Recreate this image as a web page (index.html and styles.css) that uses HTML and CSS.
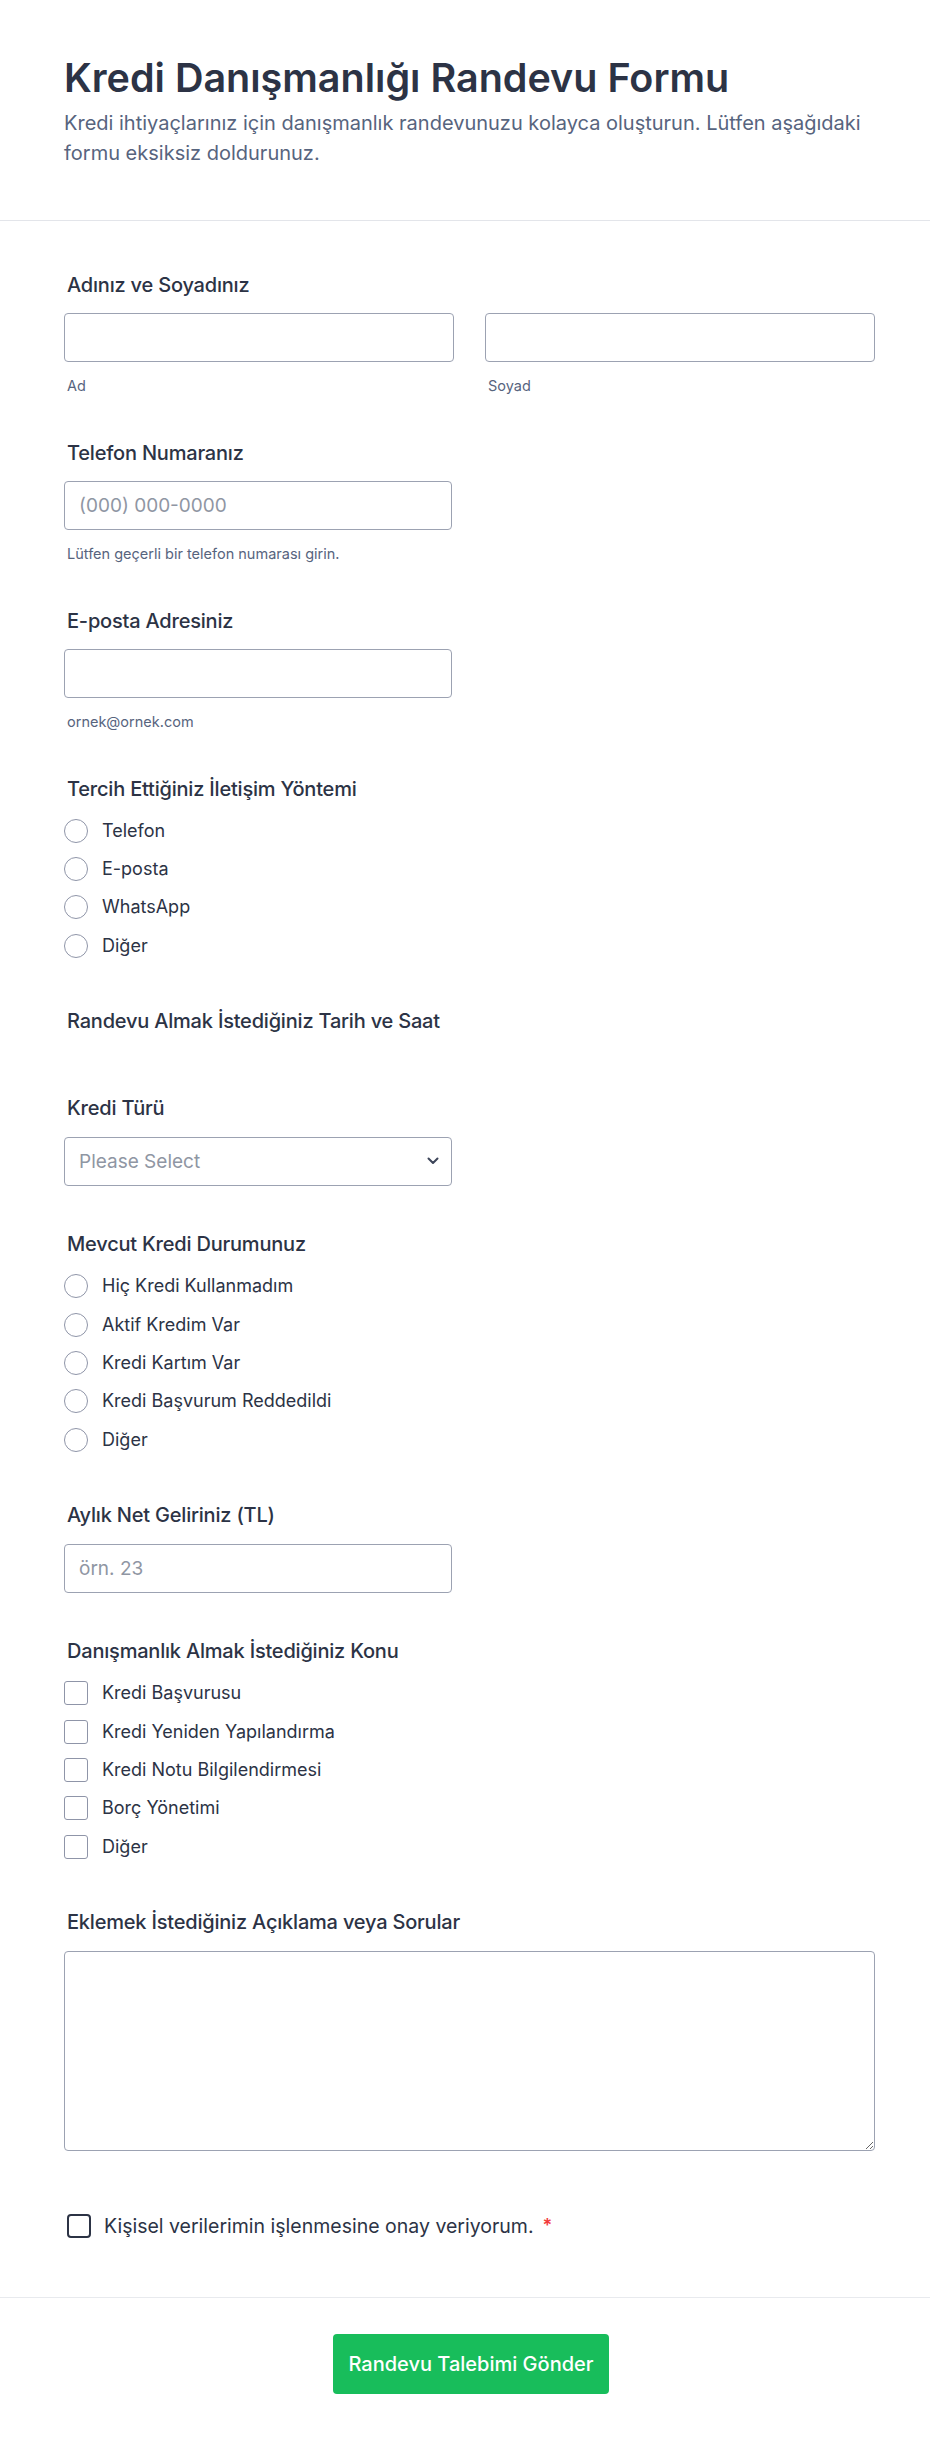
FILE: index.html
```html
<!DOCTYPE html>
<html lang="tr">
<head>
<meta charset="utf-8">
<title>Kredi Danışmanlığı Randevu Formu</title>
<link rel="stylesheet" href="styles.css">
</head>
<body>
<div class="page">
  <header class="header">
    <h1 class="title">Kredi Danışmanlığı Randevu Formu</h1>
    <p class="subtitle">Kredi ihtiyaçlarınız için danışmanlık randevunuzu kolayca oluşturun. Lütfen aşağıdaki formu eksiksiz doldurunuz.</p>
  </header>

  <form class="form-body">
    <div class="q">
      <label class="q-label">Adınız ve Soyadınız</label>
      <div class="name-grid">
        <div class="name-col">
          <input class="field field-fill" type="text">
          <span class="sublabel">Ad</span>
        </div>
        <div class="name-col">
          <input class="field field-fill" type="text">
          <span class="sublabel">Soyad</span>
        </div>
      </div>
    </div>

    <div class="q">
      <label class="q-label">Telefon Numaranız</label>
      <input class="field" type="tel" placeholder="(000) 000-0000">
      <span class="sublabel">Lütfen geçerli bir telefon numarası girin.</span>
    </div>

    <div class="q">
      <label class="q-label">E-posta Adresiniz</label>
      <input class="field" type="email">
      <span class="sublabel">ornek@ornek.com</span>
    </div>

    <div class="q">
      <label class="q-label q-label-opts">Tercih Ettiğiniz İletişim Yöntemi</label>
      <div class="opts">
        <label class="opt"><input class="radio" type="radio" name="iletisim"><span>Telefon</span></label>
        <label class="opt"><input class="radio" type="radio" name="iletisim"><span>E-posta</span></label>
        <label class="opt"><input class="radio" type="radio" name="iletisim"><span>WhatsApp</span></label>
        <label class="opt"><input class="radio" type="radio" name="iletisim"><span>Diğer</span></label>
      </div>
    </div>

    <div class="q">
      <label class="q-label">Randevu Almak İstediğiniz Tarih ve Saat</label>
    </div>

    <div class="q">
      <label class="q-label">Kredi Türü</label>
      <div class="select-wrap">
        <select class="field select">
          <option>Please Select</option>
        </select>
        <svg class="chev" width="12" height="8" viewBox="0 0 12 8" aria-hidden="true">
          <path d="M1.5 1.5 L6 6 L10.5 1.5" fill="none" stroke="#3d4559" stroke-width="2" stroke-linecap="round" stroke-linejoin="round"/>
        </svg>
      </div>
    </div>

    <div class="q">
      <label class="q-label q-label-opts">Mevcut Kredi Durumunuz</label>
      <div class="opts">
        <label class="opt"><input class="radio" type="radio" name="durum"><span>Hiç Kredi Kullanmadım</span></label>
        <label class="opt"><input class="radio" type="radio" name="durum"><span>Aktif Kredim Var</span></label>
        <label class="opt"><input class="radio" type="radio" name="durum"><span>Kredi Kartım Var</span></label>
        <label class="opt"><input class="radio" type="radio" name="durum"><span>Kredi Başvurum Reddedildi</span></label>
        <label class="opt"><input class="radio" type="radio" name="durum"><span>Diğer</span></label>
      </div>
    </div>

    <div class="q">
      <label class="q-label">Aylık Net Geliriniz (TL)</label>
      <input class="field" type="number" placeholder="örn. 23">
    </div>

    <div class="q">
      <label class="q-label q-label-opts">Danışmanlık Almak İstediğiniz Konu</label>
      <div class="opts">
        <label class="opt"><input class="check" type="checkbox"><span>Kredi Başvurusu</span></label>
        <label class="opt"><input class="check" type="checkbox"><span>Kredi Yeniden Yapılandırma</span></label>
        <label class="opt"><input class="check" type="checkbox"><span>Kredi Notu Bilgilendirmesi</span></label>
        <label class="opt"><input class="check" type="checkbox"><span>Borç Yönetimi</span></label>
        <label class="opt"><input class="check" type="checkbox"><span>Diğer</span></label>
      </div>
    </div>

    <div class="q">
      <label class="q-label">Eklemek İstediğiniz Açıklama veya Sorular</label>
      <textarea class="field textarea"></textarea>
    </div>

    <div class="q q-consent">
      <label class="consent"><input class="check check-dark" type="checkbox"><span>Kişisel verilerimin işlenmesine onay veriyorum.</span><span class="req">*</span></label>
    </div>
  </form>

  <footer class="footer">
    <button class="submit" type="button">Randevu Talebimi Gönder</button>
  </footer>
</div>
</body>
</html>
```

FILE: styles.css
```css
html, body {
  margin: 0;
  padding: 0;
  background: #ffffff;
}

body {
  font-family: Inter, "Noto Sans", "Liberation Sans", sans-serif;
  color: #2c3345;
}

.page {
  width: 930px;
}

.header {
  padding: 54px 55px 52px 64px;
  border-bottom: 1px solid #e3e5ea;
}

.title {
  margin: 0;
  font-size: 39.5px;
  line-height: 48px;
  font-weight: 600;
  color: #2c3345;
}

.subtitle {
  margin: 6px 0 0;
  font-size: 20px;
  line-height: 30px;
  font-weight: 400;
  color: #57647e;
}

.form-body {
  padding: 51.5px 55px 59px 64px;
  display: flex;
  flex-direction: column;
  gap: 46.5px;
}

.q {
  display: flex;
  flex-direction: column;
  align-items: flex-start;
}

.q-label {
  display: block;
  padding-left: 3px;
  font-size: 20px;
  line-height: 24px;
  font-weight: 500;
  letter-spacing: -0.2px;
  color: #2c3345;
  margin-bottom: 16.5px;
}

.q-label-opts {
  margin-bottom: 18px;
}

.field {
  display: block;
  box-sizing: border-box;
  width: 388px;
  height: 49px;
  margin: 0;
  padding: 0 14px;
  border: 1px solid #9ca2b2;
  border-radius: 4px;
  background: #ffffff;
  font-family: Inter, "Noto Sans", sans-serif;
  font-size: 19px;
  color: #2c3345;
  outline: none;
}

.field::placeholder {
  color: #8f96a3;
  opacity: 1;
}

.field[type="number"]::-webkit-inner-spin-button,
.field[type="number"]::-webkit-outer-spin-button {
  -webkit-appearance: none;
  margin: 0;
}

.name-grid {
  display: grid;
  grid-template-columns: 390px 390px;
  column-gap: 31px;
}

.field-fill {
  width: 100%;
}

.sublabel {
  display: block;
  padding-left: 3px;
  margin-top: 16px;
  font-size: 14.5px;
  line-height: 16px;
  color: #57647e;
}

.opts {
  display: flex;
  flex-direction: column;
  gap: 14.4px;
  margin-bottom: 5px;
}

.opt {
  display: flex;
  align-items: center;
  gap: 14px;
  height: 24px;
  font-size: 18px;
  line-height: 24px;
  color: #2c3345;
}

.radio,
.check {
  -webkit-appearance: none;
  appearance: none;
  box-sizing: border-box;
  flex: none;
  width: 24px;
  height: 24px;
  margin: 0;
  border: 1px solid #8f95a8;
  background: #ffffff;
}

.radio {
  border-radius: 50%;
}

.check {
  border-radius: 3px;
}

.select-wrap {
  position: relative;
  width: 388px;
}

.select {
  -webkit-appearance: none;
  appearance: none;
  color: #8f96a3;
  padding-right: 40px;
}

.chev {
  position: absolute;
  right: 13px;
  top: 20px;
  pointer-events: none;
}

.textarea {
  width: 811px;
  height: 200px;
  padding: 12px 14px;
  resize: both;
}

.q-consent {
  margin-top: 17px;
}

.consent {
  display: flex;
  align-items: center;
  height: 24px;
  padding-left: 3px;
  font-size: 19.5px;
  line-height: 24px;
  color: #2c3345;
}

.check-dark {
  border: 2px solid #2c3345;
  border-radius: 4px;
  margin-right: 13px;
}

.req {
  margin-left: 9px;
  color: #f23a3c;
  font-weight: 600;
  font-size: 18px;
  vertical-align: 4px;
}

.footer {
  border-top: 1px solid #e8eaee;
  padding: 36px 52px 49px 64px;
  text-align: center;
}

.submit {
  height: 60px;
  padding: 0 15.5px;
  border: none;
  border-radius: 4px;
  background: #18bd5b;
  color: #ffffff;
  font-family: Inter, "Noto Sans", sans-serif;
  font-size: 20px;
  font-weight: 500;
  cursor: pointer;
}
```
